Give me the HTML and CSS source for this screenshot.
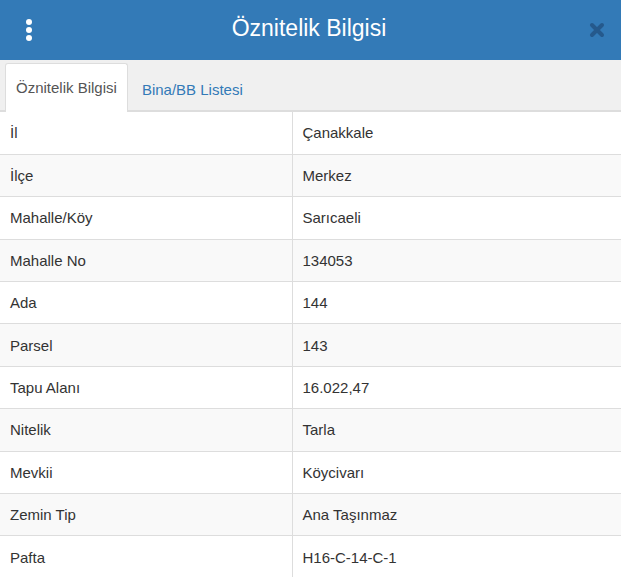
FILE: index.html
```html
<!DOCTYPE html>
<html>
<head>
<meta charset="utf-8">
<link rel="stylesheet" href="styles.css">
</head>
<body>
<div class="panel">
  <div class="header">
    <span class="menu">
      <svg width="8" height="24" viewBox="0 0 8 24"><circle cx="4" cy="4" r="3" fill="#fff"/><circle cx="4" cy="12" r="3" fill="#fff"/><circle cx="4" cy="20" r="3" fill="#fff"/></svg>
    </span>
    <span class="title">Öznitelik Bilgisi</span>
    <span class="close">
      <svg width="16" height="16" viewBox="0 0 16 16"><path d="M3 3L13 13M13 3L3 13" stroke="#25598c" stroke-width="4" stroke-linecap="round"/></svg>
    </span>
  </div>
  <div class="tabs">
    <div class="tab active">Öznitelik Bilgisi</div>
    <div class="tab">Bina/BB Listesi</div>
  </div>
  <table class="attrs">
    <tr><td>İl</td><td>Çanakkale</td></tr>
    <tr><td>İlçe</td><td>Merkez</td></tr>
    <tr><td>Mahalle/Köy</td><td>Sarıcaeli</td></tr>
    <tr><td>Mahalle No</td><td>134053</td></tr>
    <tr><td>Ada</td><td>144</td></tr>
    <tr><td>Parsel</td><td>143</td></tr>
    <tr><td>Tapu Alanı</td><td>16.022,47</td></tr>
    <tr><td>Nitelik</td><td>Tarla</td></tr>
    <tr><td>Mevkii</td><td>Köycivarı</td></tr>
    <tr><td>Zemin Tip</td><td>Ana Taşınmaz</td></tr>
    <tr><td>Pafta</td><td>H16-C-14-C-1</td></tr>
  </table>
</div>
</body>
</html>
```
FILE: styles.css
```css
html, body {
  margin: 0;
  padding: 0;
  background: #fff;
}
body {
  font-family: "Liberation Sans", Arial, sans-serif;
  font-size: 15px;
  color: #333;
}
.panel {
  width: 621px;
  height: 577px;
  overflow: hidden;
}
.header {
  height: 60px;
  background: #337ab7;
  display: flex;
  align-items: center;
}
.menu {
  width: 8px;
  height: 24px;
  margin-left: 25px;
  display: flex;
}
.title {
  flex: 1;
  text-align: center;
  color: #fff;
  font-size: 23px;
  margin-left: -4px;
  margin-top: -4px;
}
.close {
  width: 16px;
  height: 16px;
  margin-right: 16px;
  display: flex;
}
.tabs {
  height: 50px;
  background: #f0f0f0;
  border-bottom: 2px solid #ddd;
  display: flex;
  align-items: flex-end;
  padding-left: 5px;
}
.tab {
  height: 46px;
  line-height: 46px;
  padding: 0 11px;
  margin-left: 2px;
  color: #337ab7;
  margin-bottom: -2px;
  box-sizing: border-box;
  border: 1px solid transparent;
  border-bottom: none;
  border-radius: 3px 3px 0 0;
}
.tab.active {
  background: #fff;
  color: #555;
  border-color: #ddd;
  height: 49px;
  line-height: 47px;
  padding: 0 10px;
  margin-left: 0;
}
.attrs {
  width: 100%;
  border-collapse: collapse;
  table-layout: fixed;
}
.attrs td {
  height: 42.4px;
  padding: 0 10px;
  box-sizing: border-box;
  border-top: 1px solid #ddd;
  vertical-align: middle;
}
.attrs tr:first-child td {
  border-top: none;
}
.attrs td:first-child {
  width: 292px;
  border-right: 1px solid #ddd;
}
.attrs tr:nth-child(even) td {
  background: #f9f9f9;
}
```
